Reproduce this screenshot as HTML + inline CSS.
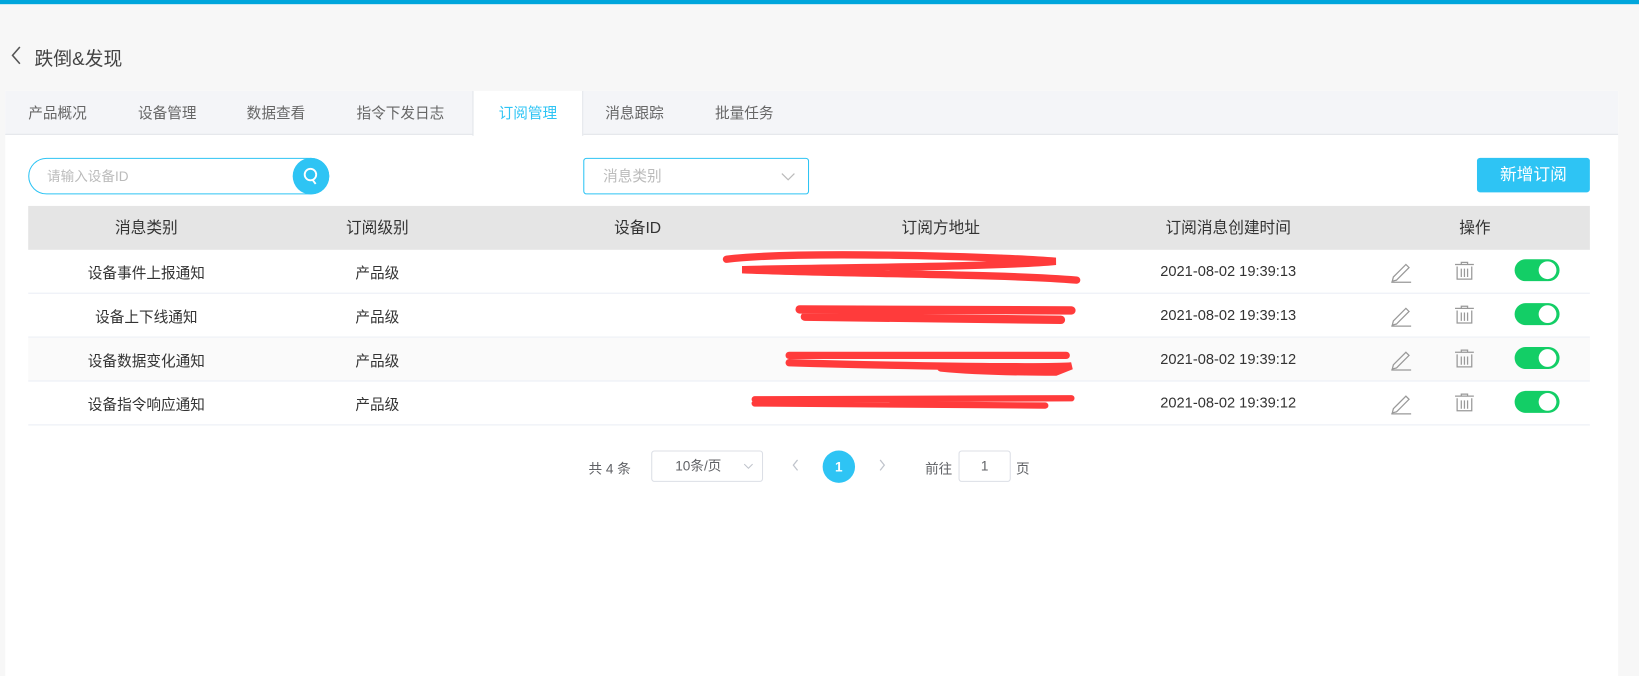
<!DOCTYPE html>
<html><head><meta charset="utf-8"><style>
*{margin:0;padding:0;box-sizing:border-box}
body{width:1639px;height:672px;background:#f7f7f7;font-family:"Liberation Sans","Noto Sans CJK SC",sans-serif;position:relative;overflow:hidden;color:#333}
#w{position:absolute;left:0;top:0;width:1568px;height:643px;transform:scale(1.04528);transform-origin:0 0}
.abs{position:absolute}
.top{left:0;top:0;width:1568px;height:4px;background:#00a6dc}
.title{left:33px;top:42px;font-size:18px;color:#444}
.panel{left:5px;top:87px;width:1543px;height:560px;background:#fff}
.tabs{left:5px;top:87px;width:1543px;height:42px;background:#f4f5f8;border-bottom:1px solid #e2e5ea}
.tab{position:absolute;top:0;height:42px;line-height:42px;font-size:14px;color:#666}
.tab.on{background:#fff;color:#2ec4f4;border-left:1px solid #e2e5ea;border-right:1px solid #e2e5ea;height:43px;text-align:center}
.search{left:27px;top:151px;width:288px;height:35px;border:1px solid #2ec4f4;border-radius:18px;font-size:13px;color:#bbb;line-height:33px;padding-left:17px}
.sbtn{left:280px;top:151px;width:35px;height:35px;border-radius:50%;background:#2ec4f4}
.sel{left:558px;top:151px;width:216px;height:35px;border:1px solid #2ec4f4;border-radius:3px;font-size:14px;color:#bbb;line-height:33px;padding-left:18px}
.add{left:1413px;top:151px;width:108px;height:33px;background:#2ec4f4;border-radius:3px;color:#fff;font-size:16px;line-height:33px;text-align:center}
.th{left:27px;top:197px;width:1494px;height:42px;background:#e5e5e5}
.c{position:absolute;font-size:14px;transform:translateX(-50%);white-space:nowrap}
.row{position:absolute;left:27px;width:1494px;height:42px;border-bottom:1px solid #ebeef5}
.tg{position:absolute;width:43px;height:21px;border-radius:11px;background:#13ce66}
.tg:after{content:"";position:absolute;right:3px;top:2px;width:17px;height:17px;border-radius:50%;background:#fff}
</style></head><body><div id="w">
<div class="abs top"></div>
<svg class="abs" style="left:10px;top:44px" width="12" height="18"><path d="M9 1L2 9l7 8" fill="none" stroke="#555" stroke-width="1.5"/></svg>
<div class="abs title">跌倒&amp;发现</div>
<div class="abs panel"></div>
<div class="abs tabs">
<div class="tab" style="left:22px">产品概况</div>
<div class="tab" style="left:127px">设备管理</div>
<div class="tab" style="left:231px">数据查看</div>
<div class="tab" style="left:336px">指令下发日志</div>
<div class="tab on" style="left:447px;width:106px">订阅管理</div>
<div class="tab" style="left:574px">消息跟踪</div>
<div class="tab" style="left:679px">批量任务</div>
</div>
<div class="abs search">请输入设备ID</div>
<div class="abs sbtn"><svg width="35" height="35"><circle cx="17" cy="16" r="5.5" fill="none" stroke="#fff" stroke-width="1.8"/><path d="M19 21l3 4" stroke="#fff" stroke-width="1.8"/></svg></div>
<div class="abs sel">消息类别<svg style="position:absolute;right:12px;top:12px" width="14" height="10"><path d="M1 2l6 6 6-6" fill="none" stroke="#bbb" stroke-width="1.2"/></svg></div>
<div class="abs add">新增订阅</div>
<div class="abs th"></div>
<div class="c" style="left:140px;top:207px;font-size:15px">消息类别</div>
<div class="c" style="left:361px;top:207px;font-size:15px">订阅级别</div>
<div class="c" style="left:610px;top:207px;font-size:15px">设备ID</div>
<div class="c" style="left:900px;top:207px;font-size:15px">订阅方地址</div>
<div class="c" style="left:1175px;top:207px;font-size:15px">订阅消息创建时间</div>
<div class="c" style="left:1411px;top:207px;font-size:15px">操作</div>

<div class="row" style="top:239px"></div>
<div class="row" style="top:281px"></div>
<div class="row" style="top:323px;background:#fafafa"></div>
<div class="row" style="top:365px"></div>

<div class="c" style="left:140px;top:251px">设备事件上报通知</div>
<div class="c" style="left:140px;top:293px">设备上下线通知</div>
<div class="c" style="left:140px;top:335px">设备数据变化通知</div>
<div class="c" style="left:140px;top:377px">设备指令响应通知</div>
<div class="c" style="left:361px;top:251px">产品级</div>
<div class="c" style="left:361px;top:293px">产品级</div>
<div class="c" style="left:361px;top:335px">产品级</div>
<div class="c" style="left:361px;top:377px">产品级</div>
<div class="c" style="left:1175px;top:251px">2021-08-02 19:39:13</div>
<div class="c" style="left:1175px;top:293px">2021-08-02 19:39:13</div>
<div class="c" style="left:1175px;top:335px">2021-08-02 19:39:12</div>
<div class="c" style="left:1175px;top:377px">2021-08-02 19:39:12</div>

<svg class="abs" style="left:0;top:0" width="1568" height="643">
<g fill="none" stroke="#ff3b3b" stroke-linecap="round">
<path d="M695 248 C760 240 950 245 1010 250 C950 256 760 256 710 258 C800 262 960 262 1030 268" stroke-width="7"/>
<path d="M765 296 L1025 297 M770 303 L1015 306" stroke-width="8"/>
<path d="M755 340 L1020 340 M755 347 C850 350 1000 352 1025 350 L1010 356 C960 356 920 354 900 352" stroke-width="7"/>
<path d="M722 382 L1025 381 M722 386 L1000 388" stroke-width="6"/>
</g>
<g fill="none" stroke="#999" stroke-width="1.2">
<g id="ic"><path d="M1333 265l12-12 3 3-12 12-4 1z"/><path d="M1331 270h19"/>
<path d="M1392 253h18M1398 253v-2h6v2M1394 255v12h14v-12M1398 257v8M1401 257v8M1404 257v8"/></g>
<use href="#ic" y="42"/><use href="#ic" y="84"/><use href="#ic" y="126"/>
</g>
</svg>
<div class="tg" style="left:1449px;top:248px"></div>
<div class="tg" style="left:1449px;top:290px"></div>
<div class="tg" style="left:1449px;top:332px"></div>
<div class="tg" style="left:1449px;top:374px"></div>

<div class="abs" style="left:563px;top:438px;font-size:13px;color:#606266">共 4 条</div>
<div class="abs" style="left:623px;top:431px;width:107px;height:30px;border:1px solid #dcdfe6;border-radius:3px;font-size:13px;color:#606266;line-height:28px;padding-left:22px">10条/页<svg style="position:absolute;right:8px;top:11px" width="10" height="7"><path d="M1 1l4 4 4-4" fill="none" stroke="#c0c4cc"/></svg></div>
<svg class="abs" style="left:757px;top:439px" width="8" height="12"><path d="M6 1L2 6l4 5" fill="none" stroke="#c0c4cc" stroke-width="1.2"/></svg>
<div class="abs" style="left:787px;top:431px;width:31px;height:31px;border-radius:50%;background:#2ec4f4;color:#fff;font-size:13px;font-weight:bold;text-align:center;line-height:31px">1</div>
<svg class="abs" style="left:840px;top:439px" width="8" height="12"><path d="M2 1l4 5-4 5" fill="none" stroke="#c0c4cc" stroke-width="1.2"/></svg>
<div class="abs" style="left:885px;top:438px;font-size:13px;color:#606266">前往</div>
<div class="abs" style="left:917px;top:431px;width:50px;height:30px;border:1px solid #dcdfe6;border-radius:3px;font-size:13px;color:#606266;line-height:28px;text-align:center">1</div>
<div class="abs" style="left:972px;top:438px;font-size:13px;color:#606266">页</div>
</div></body></html>
